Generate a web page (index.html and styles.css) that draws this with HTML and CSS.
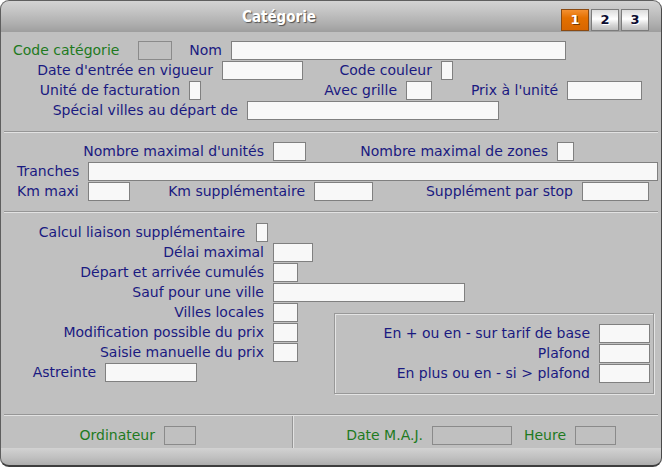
FILE: index.html
```html
<!DOCTYPE html>
<html lang="fr">
<head>
<meta charset="utf-8">
<title>Catégorie</title>
<link rel="stylesheet" href="styles.css">
</head>
<body>
<div class="window">
  <div class="titlebar">
    <div class="title">Catégorie</div>
    <div class="tabs">
      <span class="tab active">1</span>
      <span class="tab">2</span>
      <span class="tab">3</span>
    </div>
  </div>

  <div class="sec sec1">
    <div class="row r1">
      <span class="lbl green left">Code catégorie</span><span class="in dis"></span>
      <span class="lbl">Nom</span><span class="in"></span>
    </div>
    <div class="row r2">
      <span class="lbl">Date d'entrée en vigueur</span><span class="in"></span>
      <span class="lbl">Code couleur</span><span class="in"></span>
    </div>
    <div class="row r3">
      <span class="lbl">Unité de facturation</span><span class="in"></span>
      <span class="lbl">Avec grille</span><span class="in"></span>
      <span class="lbl">Prix à l'unité</span><span class="in"></span>
    </div>
    <div class="row r4">
      <span class="lbl">Spécial villes au départ de</span><span class="in"></span>
    </div>
  </div>

  <div class="sep"></div>

  <div class="sec sec2">
    <div class="row r5">
      <span class="lbl">Nombre maximal d'unités</span><span class="in"></span>
      <span class="lbl">Nombre maximal de zones</span><span class="in"></span>
    </div>
    <div class="row r6">
      <span class="lbl left">Tranches</span><span class="in"></span>
    </div>
    <div class="row r7">
      <span class="lbl left">Km maxi</span><span class="in"></span>
      <span class="lbl">Km supplémentaire</span><span class="in"></span>
      <span class="lbl">Supplément par stop</span><span class="in"></span>
    </div>
  </div>

  <div class="sep"></div>

  <div class="sec sec3">
    <div class="col-left">
      <div class="row r8"><span class="lbl wide">Calcul liaison supplémentaire</span><span class="in"></span></div>
      <div class="row r9"><span class="lbl">Délai maximal</span><span class="in"></span></div>
      <div class="row r10"><span class="lbl">Départ et arrivée cumulés</span><span class="in"></span></div>
      <div class="row r11"><span class="lbl">Sauf pour une ville</span><span class="in"></span></div>
      <div class="row r10"><span class="lbl">Villes locales</span><span class="in"></span></div>
      <div class="row r10"><span class="lbl">Modification possible du prix</span><span class="in"></span></div>
      <div class="row r10"><span class="lbl">Saisie manuelle du prix</span><span class="in"></span></div>
      <div class="row r15"><span class="lbl">Astreinte</span><span class="in"></span></div>
    </div>
    <div class="group">
      <div class="row rg"><span class="lbl">En + ou en - sur tarif de base</span><span class="in"></span></div>
      <div class="row rg"><span class="lbl">Plafond</span><span class="in"></span></div>
      <div class="row rg"><span class="lbl">En plus ou en - si &gt; plafond</span><span class="in"></span></div>
    </div>
  </div>

  <div class="sep"></div>

  <div class="footer">
    <div class="fcell fleft">
      <span class="lbl green">Ordinateur</span><span class="in dis"></span>
    </div>
    <div class="fcell fright">
      <span class="lbl green">Date M.A.J.</span><span class="in dis"></span>
      <span class="lbl green">Heure</span><span class="in dis"></span>
    </div>
  </div>

  <div class="bottombar"></div>
</div>
</body>
</html>
```

FILE: styles.css
```css
html, body {
  margin: 0;
  padding: 0;
  background: #ffffff;
}

body {
  font-family: "DejaVu Sans", "Noto Sans", sans-serif;
  font-size: 14px;
}

.window {
  position: relative;
  width: 662px;
  height: 467px;
  display: flex;
  flex-direction: column;
  background: #c0c0c0;
  border-radius: 9px;
  overflow: hidden;
  box-shadow: inset 1px 0 0 #8a8a8a, inset -1px 0 0 #8a8a8a;
}

.window::after {
  content: "";
  position: absolute;
  inset: 0;
  border: 1px solid #5e5e5e;
  border-right-color: #4a4a4a;
  border-bottom: 2px solid #3e3e3e;
  border-radius: 9px;
  pointer-events: none;
}

/* Title bar */
.titlebar {
  height: 32px;
  flex: none;
  display: flex;
  background: linear-gradient(#d4d4d4 0%, #c4c4c4 35%, #aeaeae 75%, #9e9e9e 100%);
}

.title {
  flex: 1;
  text-align: center;
  line-height: 34px;
  font-family: "DejaVu Sans Condensed", "DejaVu Sans", sans-serif;
  font-stretch: condensed;
  font-weight: bold;
  font-size: 15px;
  color: #ffffff;
  text-shadow: 1px 1px 1px #505050;
}

.tabs {
  display: flex;
  gap: 2px;
  margin: 9px 13px 0 3px;
}

.tab {
  width: 28px;
  height: 22px;
  box-sizing: border-box;
  border: 1px solid #7c7c7c;
  background: linear-gradient(#dcdcdc 0%, #ffffff 45%, #d6d6d6 75%, #bcbcbc 100%);
  font-weight: bold;
  font-size: 13px;
  line-height: 20px;
  text-align: center;
  color: #0c0c30;
  text-shadow: 1px 1px 0 #ffffff;
}

.tab.active {
  border-color: #8a4a12;
  background: linear-gradient(#f49030 0%, #e47000 40%, #d86600 100%);
  color: #ffffff;
  text-shadow: 1px 1px 0 #7a3600;
}

/* Sections */
.sec1 { padding: 9px 0 10px; }
.sec2 { padding: 9px 0 9px; }
.sec3 {
  display: flex;
  padding: 10px 0 20px;
}

.sep {
  height: 2px;
  box-sizing: border-box;
  margin: 0 4px;
  border-top: 1px solid #969696;
  border-bottom: 1px solid #e2e2e2;
  flex: none;
}

.row {
  display: grid;
  height: 20px;
  align-items: start;
}

.lbl {
  display: flex;
  justify-content: flex-end;
  height: 19px;
  line-height: 19px;
  padding-right: 9px;
  white-space: nowrap;
  color: #1a1a80;
}

.lbl.left {
  justify-content: flex-start;
}

.lbl.wide { padding-right: 11px; }

.green { color: #1e7a1e; }

.r1 .lbl.left { padding-left: 13px; }
.r6 .lbl.left,
.r7 .lbl.left { padding-left: 17px; }

.in {
  display: block;
  height: 19px;
  box-sizing: border-box;
  border: 1px solid #808080;
  background: #f8f8f8;
}

.in.dis {
  background: #c0c0c0;
  border-color: #8a8a8a;
}

.r1 { grid-template-columns: 138px 34px 59px 335px; }
.r2 { grid-template-columns: 222px 81px 138px 12px; }
.r3 { grid-template-columns: 189px 12px 205px 26px 135px 75px; }
.r4 { grid-template-columns: 247px 252px; }
.r5 { grid-template-columns: 273px 33px 251px 17px; }
.r6 { grid-template-columns: 88px 570px; }
.r7 { grid-template-columns: 88px 42px 184px 59px 209px 67px; }

.col-left { width: 334px; flex: none; }
.r8 { grid-template-columns: 256px 12px; }
.r9 { grid-template-columns: 273px 40px; }
.r10 { grid-template-columns: 273px 25px; }
.r11 { grid-template-columns: 273px 192px; }
.r15 { grid-template-columns: 105px 92px; }

.group {
  width: 320px;
  height: 81px;
  box-sizing: border-box;
  margin-top: 90px;
  padding-top: 10px;
  border: 1px solid #989898;
  box-shadow: inset 1px 1px 0 #e4e4e4, 1px 1px 0 #e4e4e4;
}

.rg { grid-template-columns: 264px 51px; }

/* Footer */
.footer {
  display: flex;
  height: 32px;
  flex: none;
}

.fcell {
  display: grid;
  align-items: start;
  padding-top: 10px;
  box-sizing: border-box;
}

.fleft {
  width: 292px;
  grid-template-columns: 164px 32px;
}

.fright {
  flex: 1;
  border-left: 1px solid #969696;
  box-shadow: inset 1px 0 0 #e2e2e2;
  grid-template-columns: 139px 80px 63px 41px;
}

.bottombar {
  flex: 1;
  background: linear-gradient(#d2d2d2 0%, #c0c0c0 50%, #a8a8a8 100%);
}
```
